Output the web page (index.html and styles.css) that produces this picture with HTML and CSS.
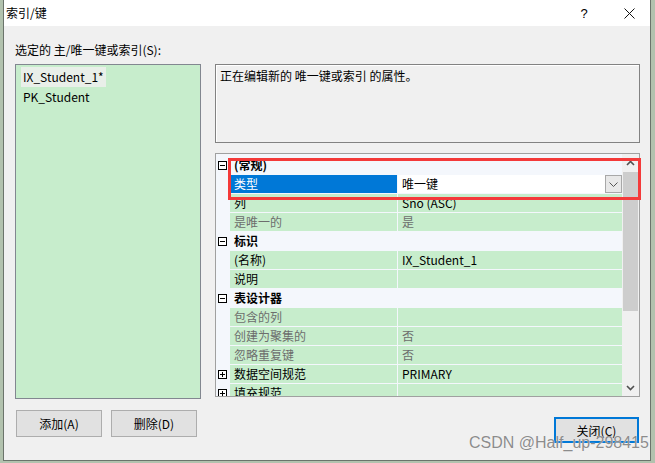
FILE: index.html
```html
<!DOCTYPE html>
<html lang="zh-CN">
  <head>
    <meta charset="UTF-8" />
    <title>索引/键</title>
    <link rel="stylesheet" href="styles.css">
  </head>
  <body>
    <div class="dialog">
      <!-- タイトルバー -->
      <div class="titlebar">
        <span class="title">索引/键</span>
        <span class="help">?</span>
        <span class="close-x">
          <svg width="11" height="11" viewBox="0 0 11 11"><path d="M0.5 0.5L10.5 10.5M10.5 0.5L0.5 10.5" stroke="#111" stroke-width="1" fill="none"/></svg>
        </span>
      </div>

      <div class="content">
        <div class="label">选定的 主/唯一键或索引(S):</div>

        <div class="main">
          <ul class="keylist">
            <li class="current">IX_Student_1*</li>
            <li>PK_Student</li>
          </ul>

          <div class="detail">
            <div class="desc">正在编辑新的 唯一键或索引 的属性。</div>

            <!-- プロパティグリッド -->
            <div class="propgrid">
              <div class="rows">
                <div class="row cat">
                  <span class="gut"><svg width="9" height="9"><rect x="0.5" y="0.5" width="8" height="8" fill="#fff" stroke="#000"/><path d="M2 4.5h5" stroke="#000"/></svg></span>
                  <span class="name">(常规)</span>
                </div>
                <div class="row prop selected">
                  <span class="gut"></span>
                  <span class="name">类型</span>
                  <span class="val">唯一键
                    <span class="dropbtn"><svg width="9" height="5"><path d="M0.5 0.5L4.5 4.5L8.5 0.5" stroke="#555" fill="none"/></svg></span>
                  </span>
                </div>
                <div class="row prop">
                  <span class="gut"></span>
                  <span class="name">列</span>
                  <span class="val">Sno (ASC)</span>
                </div>
                <div class="row prop readonly">
                  <span class="gut"></span>
                  <span class="name">是唯一的</span>
                  <span class="val">是</span>
                </div>
                <div class="row cat">
                  <span class="gut"><svg width="9" height="9"><rect x="0.5" y="0.5" width="8" height="8" fill="#fff" stroke="#000"/><path d="M2 4.5h5" stroke="#000"/></svg></span>
                  <span class="name">标识</span>
                </div>
                <div class="row prop">
                  <span class="gut"></span>
                  <span class="name">(名称)</span>
                  <span class="val">IX_Student_1</span>
                </div>
                <div class="row prop">
                  <span class="gut"></span>
                  <span class="name">说明</span>
                  <span class="val"></span>
                </div>
                <div class="row cat">
                  <span class="gut"><svg width="9" height="9"><rect x="0.5" y="0.5" width="8" height="8" fill="#fff" stroke="#000"/><path d="M2 4.5h5" stroke="#000"/></svg></span>
                  <span class="name">表设计器</span>
                </div>
                <div class="row prop readonly">
                  <span class="gut"></span>
                  <span class="name">包含的列</span>
                  <span class="val"></span>
                </div>
                <div class="row prop readonly">
                  <span class="gut"></span>
                  <span class="name">创建为聚集的</span>
                  <span class="val">否</span>
                </div>
                <div class="row prop readonly">
                  <span class="gut"></span>
                  <span class="name">忽略重复键</span>
                  <span class="val">否</span>
                </div>
                <div class="row prop">
                  <span class="gut"><svg width="9" height="9"><rect x="0.5" y="0.5" width="8" height="8" fill="#fff" stroke="#000"/><path d="M2 4.5h5M4.5 2v5" stroke="#000"/></svg></span>
                  <span class="name">数据空间规范</span>
                  <span class="val">PRIMARY</span>
                </div>
                <div class="row prop">
                  <span class="gut"><svg width="9" height="9"><rect x="0.5" y="0.5" width="8" height="8" fill="#fff" stroke="#000"/><path d="M2 4.5h5M4.5 2v5" stroke="#000"/></svg></span>
                  <span class="name">填充规范</span>
                  <span class="val"></span>
                </div>
              </div>

              <div class="vscroll">
                <span class="arrow"><svg width="9" height="6"><path d="M1 5L4.5 1.5L8 5" stroke="#505050" stroke-width="1.6" fill="none"/></svg></span>
                <span class="thumb"></span>
                <span class="arrow down"><svg width="9" height="6"><path d="M1 1L4.5 4.5L8 1" stroke="#505050" stroke-width="1.6" fill="none"/></svg></span>
              </div>

              <!-- 赤枠の強調 -->
              <div class="highlight"></div>
            </div>
          </div>
        </div>

        <div class="footer">
          <button class="btn add">添加(A)</button>
          <button class="btn del">删除(D)</button>
          <button class="btn primary">关闭(C)</button>
        </div>

        <div class="watermark">CSDN @Half_up-298415</div>
      </div>
    </div>
  </body>
</html>
```

FILE: styles.css
```css
/* ベース */
body {
  margin: 0;
  padding: 0 0 0 3px;
  background-color: #b2c2ae;
  font-family: "Noto Sans CJK SC", "Noto Sans", sans-serif;
  font-size: 12px;
  color: #000;
}
.dialog {
  width: 648px;
  height: 461px;
  box-sizing: border-box;
  border: 1px solid #6b746b;
  border-top: none;
  display: flex;
  flex-direction: column;
  background-color: #f0f0f0;
}
/* タイトルバー */
.titlebar {
  height: 26px;
  flex: none;
  display: flex;
  align-items: center;
  background-color: #fff;
  padding-left: 2px;
}
.titlebar .title {
  line-height: 26px;
}
.titlebar .help {
  margin-left: auto;
  width: 48px;
  text-align: center;
  font-family: "Liberation Sans", sans-serif;
  font-size: 13px;
}
.titlebar .close-x {
  width: 42px;
  display: flex;
  justify-content: center;
}
/* 本体 */
.content {
  flex: 1;
  position: relative;
  padding: 16px 10px 0 11px;
}
.label {
  line-height: 16px;
}
.main {
  display: flex;
  gap: 14px;
  margin-top: 6px;
}
.keylist {
  width: 186px;
  height: 335px;
  box-sizing: border-box;
  margin: 0;
  padding: 2px 0 0 5px;
  list-style: none;
  background-color: #c7edcc;
  border: 1px solid #828790;
}
.keylist li {
  display: table;
  padding: 0 2px;
  line-height: 20px;
}
.keylist li.current {
  background-color: #e9efe9;
}
.detail {
  width: 425px;
  display: flex;
  flex-direction: column;
  gap: 10px;
}
.desc {
  height: 79px;
  box-sizing: border-box;
  border: 1px solid #828282;
  padding: 3px 4px;
  line-height: 16px;
  box-shadow: inset 1px 1px 0 #fff;
}
/* プロパティグリッド */
.propgrid {
  position: relative;
  height: 244px;
  box-sizing: border-box;
  border: 1px solid #a0a0a0;
  background-color: #f4f7fc;
  display: flex;
}
.rows {
  width: 406px;
  padding-top: 2px;
  overflow: hidden;
}
.row {
  display: flex;
  height: 19px;
  padding-bottom: 1px;
  box-sizing: border-box;
  line-height: 18px;
}
.gut {
  width: 14px;
  flex: none;
  display: flex;
  align-items: center;
  padding-left: 2px;
  box-sizing: border-box;
}
.gut svg {
  display: block;
}
.name {
  width: 167px;
  flex: none;
  padding-left: 4px;
  box-sizing: border-box;
  background-color: #c7edcc;
}
.val {
  flex: 1;
  margin-left: 1px;
  padding-left: 4px;
  background-color: #c7edcc;
  display: flex;
  justify-content: space-between;
}
.cat .name {
  width: auto;
  background-color: transparent;
  font-weight: bold;
}
.readonly {
  color: #6d6d6d;
}
.selected .name {
  background-color: #0078d7;
  color: #fff;
}
.selected .val {
  background-color: #fff;
}
.dropbtn {
  width: 17px;
  height: 18px;
  box-sizing: border-box;
  border: 1px solid #a8a8a8;
  background-color: #e8e8e8;
  display: flex;
  align-items: center;
  justify-content: center;
}
.vscroll {
  width: 17px;
  display: flex;
  flex-direction: column;
  background-color: #f0f0f0;
}
.vscroll .arrow {
  height: 17px;
  display: flex;
  align-items: center;
  justify-content: center;
}
.vscroll .arrow.down {
  margin-top: auto;
}
.vscroll .thumb {
  height: 139px;
  margin: 1px 1px 0 1px;
  background-color: #cdcdcd;
}
.highlight {
  position: absolute;
  left: 12px;
  top: 4px;
  width: 413px;
  height: 42px;
  box-sizing: border-box;
  border: 3px solid #f43a3a;
}
/* ボタン */
.footer {
  display: flex;
  align-items: flex-start;
}
.btn {
  font-family: inherit;
  font-size: 12px;
  color: #000;
  background-color: #e1e1e1;
  border: 1px solid #adadad;
  padding: 0;
  width: 86px;
  height: 27px;
}
.btn.add {
  margin: 11px 0 0 1px;
}
.btn.del {
  margin: 11px 0 0 9px;
}
.btn.primary {
  margin: 18px 1px 0 auto;
  width: 85px;
  height: 26px;
  border: 2px solid #0078d7;
}
.watermark {
  position: absolute;
  left: 465px;
  top: 408px;
  font-family: "Liberation Sans", sans-serif;
  font-size: 16px;
  line-height: 18px;
  color: #8c8c8c;
  text-shadow: 0 0 1px #fff;
}
```
